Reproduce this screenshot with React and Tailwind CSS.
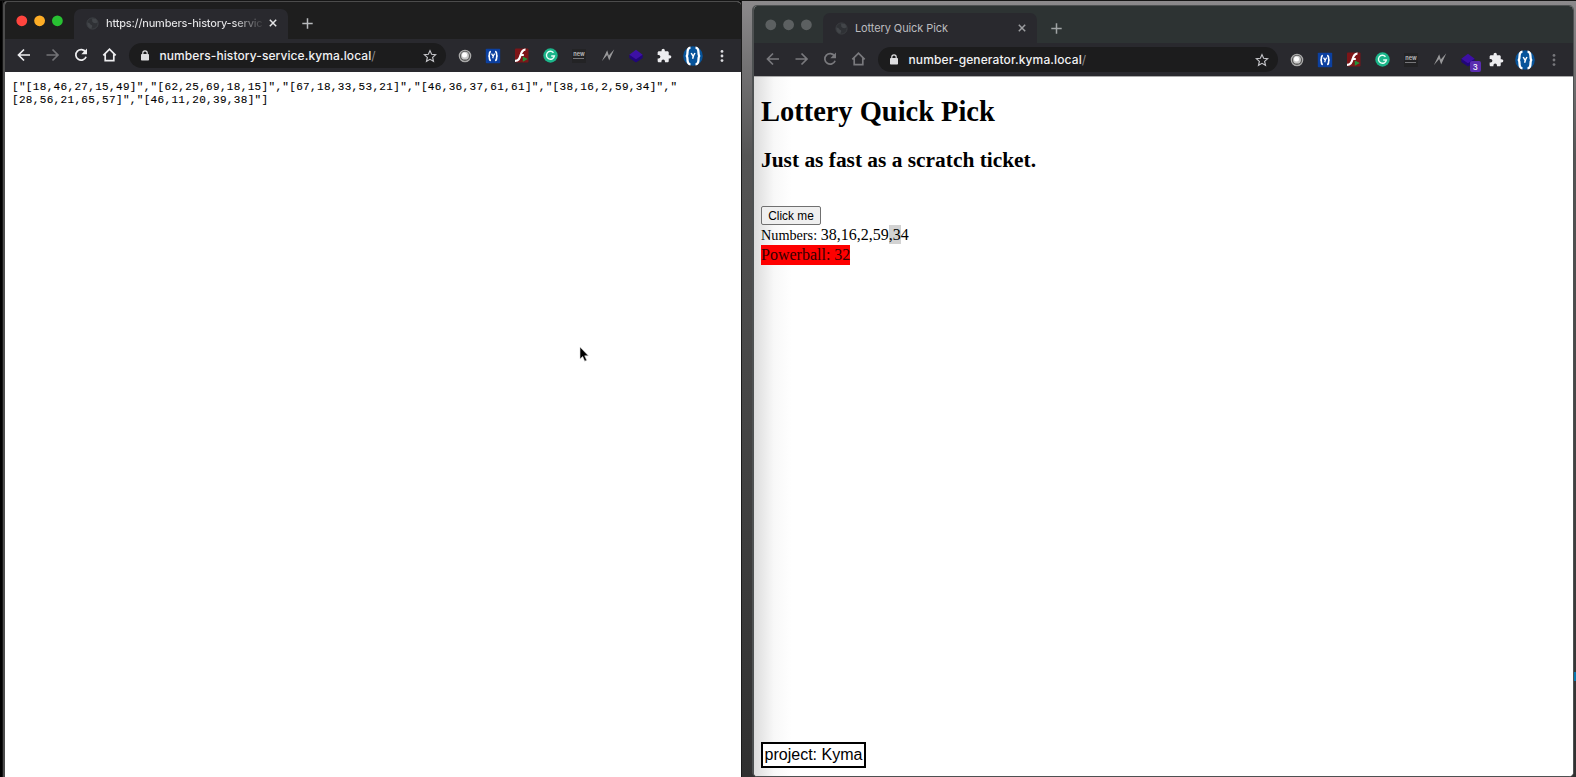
import React from "react";

function Globe({ dim }) {
  return (
    <svg width="13" height="13" viewBox="0 0 13 13" className="shrink-0">
      <circle cx="6.500" cy="6.500" r="5.600" fill="#2f3135" stroke={dim ? "#3c3e42" : "#3f4246"} strokeWidth="1" />
      <path d="M1.300 5.500c2 .2 3 1 3.400 2.200 1.500.3 1.900 1.200 1.300 2.300l-.8 1.800C2.800 11.300 1 9 1.300 5.500z" fill="#424549" />
      <path d="M6 1.400l4 .6 1.700 3-1.500 1.200-2.300-.3-1.600-1.200z" fill="#424549" />
    </svg>
  );
}

function TabStrip({ active, title, titleClass }) {
  const lights = active ? ["#ff453e", "#fdad26", "#28c132"] : ["#5c6061", "#5c6061", "#5c6061"];
  return (
    <div className={"flex h-[37px] shrink-0 items-end " + (active ? "bg-[#1e1e1e]" : "bg-[#2d3333]")}>
      <div className="flex w-[69px] shrink-0 self-start pl-[10.500px] pt-[13px]">
        <svg width="50" height="12" viewBox="0 0 50 12">
          <circle cx="5.800" cy="5.800" r="5.400" fill={lights[0]} />
          <circle cx="23.600" cy="5.800" r="5.400" fill={lights[1]} />
          <circle cx="41.400" cy="5.800" r="5.400" fill={lights[2]} />
        </svg>
      </div>
      <div className={"flex h-[30px] w-[214px] shrink-0 items-center rounded-t-[7px] bg-[#29292e] pl-[11.500px] " + (active ? "pb-[2px]" : "pb-0")}>
        <Globe dim={!active} />
        <div className={"ml-[7.500px] w-[156px] shrink-0 whitespace-nowrap font-['Inter',sans-serif] " + titleClass}>
          {title}
        </div>
        <svg width="8" height="8" viewBox="0 0 8 8" className="ml-[7px]">
          <path d="M.8.8l6.400 6.400M7.200.8L.8 7.200" stroke={active ? "#e4e5e7" : "#9c9da0"} strokeWidth="1.500" />
        </svg>
      </div>
      <div className={"flex h-[30px] items-center pl-[14px] " + (active ? "pb-[1px]" : "pb-0")}>
        <svg width="11" height="11" viewBox="0 0 11 11">
          <path d="M5.500.3v10.400M.3 5.500h10.400" stroke={active ? "#b8babd" : "#a0a4a5"} strokeWidth="1.500" />
        </svg>
      </div>
    </div>
  );
}

function NavIcons({ active }) {
  const on = active ? "#eeeef0" : "#79797d";
  const off = active ? "#737377" : "#79797d";
  return (
    <svg width="124" height="33" viewBox="1 0 124 33" fill="none" strokeWidth="1.700" className="shrink-0">
      <path d="M26 16H15M20 10.500L14.500 16l5.500 5.500" stroke={on} />
      <path d="M42.500 16h11M48.500 10.500l5.500 5.500-5.500 5.500" stroke={off} />
      <path d="M81.600 13a5.300 5.300 0 1 0 .5 4.700" stroke={on} />
      <path d="M83 9.500v5.700h-5.700z" fill={on} />
      <path d="M99.300 16.300l6.200-6.100 6.200 6.100M101.200 15.200v6.500h8.600v-6.500" stroke={on} />
    </svg>
  );
}

function BadgeMark({ size, round }) {
  return (
    <svg width={size} height={size} viewBox="0 0 20 20">
      {round ? <circle cx="10" cy="10" r="9.800" fill="#07549b" /> : <rect x="1" y="1" width="18" height="18" rx="1" fill="#0c40a0" />}
      <g fill="none" stroke="#fff">
        {round ? (
          <path
            d="M7.500 1.600C5 1.800 4.500 3.500 4.500 6.500c0 1.700-.1 2.500-.7 3.500.6 1 .7 1.800.7 3.500 0 3 .5 4.700 3 4.900M12.500 1.600c2.500.2 3 1.900 3 4.900 0 1.700.1 2.500.7 3.500-.6 1-.7 1.800-.7 3.500 0 3-.5 4.700-3 4.900"
            strokeWidth="2.300"
          />
        ) : (
          <path
            d="M7.400 4.300c-1.700.2-1.900 1.200-1.900 3.200 0 1.200-.1 1.800-.5 2.500.4.700.5 1.300.5 2.500 0 2 .2 3 1.900 3.200M12.600 4.300c1.700.2 1.900 1.200 1.900 3.200 0 1.200.1 1.800.5 2.500-.4.700-.5 1.300-.5 2.500 0 2-.2 3-1.900 3.200"
            strokeWidth="2"
          />
        )}
        <path d="M8.200 7l1.900 3.300L12 7M10.600 9.500l-1 3.300" strokeWidth="1.500" />
      </g>
    </svg>
  );
}

function Slot({ children }) {
  return <div className="relative flex h-full w-[28.550px] shrink-0 items-center justify-center">{children}</div>;
}

function Extensions({ active, count }) {
  return (
    <div className="flex h-full w-[295.500px] shrink-0 items-center pl-[5px]">
      <Slot>
        <svg width="14" height="14" viewBox="0 0 14 14">
          <circle cx="7" cy="7" r="5.700" fill="#575757" stroke="#a9a9a9" strokeWidth="1.200" />
          <circle cx="7" cy="6.700" r="3.900" fill="#c9c9c9" />
          <circle cx="6.500" cy="6" r="2.500" fill="#fff" />
        </svg>
      </Slot>
      <Slot><BadgeMark size={16} /></Slot>
      <Slot>
        <svg width="15" height="15" viewBox="0 0 15 15">
          <rect x="1" y=".5" width="13.500" height="14" rx="1" fill="#7d1518" />
          <path d="M11.500 1.600C8.500 1.300 7.600 3.700 6.600 7 5.600 10.500 4.700 12.800 1 12.800M5.800 7h4" fill="none" stroke="#fff" strokeWidth="2.200" />
          <path d="M8.800 8.500l5 2.600-5 2.700z" fill="#25933a" />
        </svg>
      </Slot>
      <Slot>
        <svg width="15" height="15" viewBox="0 0 15 15">
          <circle cx="7.500" cy="7.500" r="7.200" fill="#1bb58a" />
          <path d="M10.500 4.700A4 4 0 1 0 11.400 8H8.200" fill="none" stroke="#eafff8" strokeWidth="1.400" />
        </svg>
      </Slot>
      <Slot>
        <div className="flex h-[14px] w-[14px] flex-col items-center bg-[#232325] pt-[2px]">
          <span className="font-['Inter',sans-serif] text-[5.500px] font-bold leading-[6px] text-[#b5b5b5]">new</span>
          <span className="mt-[1px] h-px w-[11px] bg-[#77777a]" />
        </div>
      </Slot>
      <Slot>
        <svg width="14" height="13" viewBox="0 0 14 13">
          <path d="M.8 12.200L6.200 1.300l1.600 5.200L13.300.3 8.200 11.500 6.200 6z" fill="#98989a" />
        </svg>
      </Slot>
      <Slot>
        <svg width="14" height="14" viewBox="0 0 14 14">
          <path d="M.3 6v3L7 13.600 13.700 9V6z" fill="#21067a" />
          <path d="M7 .8l6.700 4.900L7 10.300.3 5.700z" fill="#3d10a5" />
        </svg>
        {count && (
          <span className="absolute left-[16px] top-[18px] flex h-[11px] w-[11px] items-center justify-center rounded-[2px] bg-[#5a2db0] font-['Inter',sans-serif] text-[8px] font-medium leading-none text-white">
            {count}
          </span>
        )}
      </Slot>
      <Slot>
        <svg width="15" height="15" viewBox="1 0 23 23" fill="#ececef">
          <path d="M20.500 11H19V7c0-1.100-.9-2-2-2h-4V3.500a2.500 2.500 0 0 0-5 0V5H4c-1.100 0-2 .9-2 2v3.800h1.500a2.700 2.700 0 0 1 0 5.400H2V20c0 1.100.9 2 2 2h3.800v-1.500a2.700 2.700 0 0 1 5.400 0V22H17c1.100 0 2-.9 2-2v-4h1.500a2.500 2.500 0 0 0 0-5z" />
        </svg>
      </Slot>
      <Slot><BadgeMark size={20} round /></Slot>
      <Slot>
        <svg width="4" height="14" viewBox="0 0 4 14" fill={active ? "#dcdce0" : "#77777b"}>
          <circle cx="2" cy="2.400" r="1.400" />
          <circle cx="2" cy="7" r="1.400" />
          <circle cx="2" cy="11.600" r="1.400" />
        </svg>
      </Slot>
    </div>
  );
}

function Toolbar({ active, host, count, hostClass }) {
  return (
    <div className="flex h-[33px] shrink-0 items-center bg-[#29292e]">
      <NavIcons active={active} />
      <div className="flex h-[25px] min-w-0 flex-1 items-center rounded-full bg-[#1c1c1d] pl-[12px] pr-[9px]">
        <svg width="8" height="11" viewBox="0 0 8 11" className="shrink-0">
          <rect y="4" width="8" height="6.500" rx=".8" fill="#dedee0" />
          <path d="M1.800 4.500V3a2.200 2.200 0 0 1 4.400 0v1.500" fill="none" stroke="#dedee0" strokeWidth="1.200" />
        </svg>
        <div className={"ml-[10.500px] flex-1 whitespace-nowrap font-['Inter',sans-serif] text-[12px] font-medium leading-[16px] text-[#f1f1f3] " + hostClass}>
          {host}
          <span className="font-normal text-[#8a8a8e]">/</span>
        </div>
        <svg width="14" height="14" viewBox="0 0 24 24" fill="none" stroke="#c4c4c8" strokeWidth="2">
          <path d="M12 2.800l2.800 6.300 6.800.7-5.100 4.600 1.500 6.800-6-3.500-6 3.500 1.500-6.800L2.400 9.800l6.800-.7z" />
        </svg>
      </div>
      <Extensions active={active} count={count} />
    </div>
  );
}

function HistoryWindow() {
  return (
    <div className="flex h-[776px] w-[738px] shrink-0 flex-col overflow-hidden rounded-t-[4px] border-l-2 border-t border-[#4c4c4c] bg-white">
      <TabStrip
        active
        title="https://numbers-history-servic"
        titleClass="text-[11px] font-medium tracking-[-0.210px] bg-linear-to-r from-[#e6e6e8] from-82% to-[#3a3a3e] bg-clip-text text-transparent"
      />
      <Toolbar active host="numbers-history-service.kyma.local" hostClass="tracking-[0.090px]" />
      <div className="pl-[7px] pt-[9px] font-['Liberation_Mono',monospace] text-[11px] leading-[13.300px] tracking-[0.330px] text-black [-webkit-text-stroke:0.1px_#000]">
        <div className="whitespace-nowrap">{'["[18,46,27,15,49]","[62,25,69,18,15]","[67,18,33,53,21]","[46,36,37,61,61]","[38,16,2,59,34]","'}</div>
        <div className="whitespace-nowrap">{'[28,56,21,65,57]","[46,11,20,39,38]"]'}</div>
      </div>
    </div>
  );
}

function LotteryWindow() {
  return (
    <div className="mt-[4px] flex h-[772px] w-[822px] shrink-0 flex-col overflow-hidden rounded-[5px] border border-l-2 border-[#4e5152] bg-white">
      <TabStrip title="Lottery Quick Pick" titleClass="text-[11px] tracking-[-0.100px] text-[#bcbcbf]" />
      <Toolbar host="number-generator.kyma.local" count="3" hostClass="tracking-[0.120px]" />
      <div className="flex flex-1 flex-col items-start border-t border-[#aaa] bg-linear-to-r from-[#dcdcdc] via-[#f8f8f8] via-[20px] to-white to-[38px] pb-[8px] pl-[7px] font-['Liberation_Serif',serif] text-black">
        <h1 className="mt-[18px] text-[28.450px] font-bold leading-[33px]">Lottery Quick Pick</h1>
        <h2 className="mt-[20px] text-[21.400px] font-bold leading-[25px]">Just as fast as a scratch ticket.</h2>
        <button className="mt-[33px] h-[19px] w-[60px] rounded-[2px] border border-[#707070] bg-[#efefef] font-['Liberation_Sans',sans-serif] text-[11.860px] leading-[16px]">
          Click me
        </button>
        <div className="h-[20px] whitespace-pre text-[14.230px] leading-[19px]">
          {"Numbers: "}
          <span className="text-[16px]">38,16,2,59</span>
          <span className="inline-block h-[19px] bg-[#d2d2d2] align-top text-[16px]">,3</span>
          <span className="text-[16px]">4</span>
        </div>
        <div className="h-[20px] bg-[#fe0000] text-[16px] leading-[20px] text-[#300]">Powerball: 32</div>
        <div className="mt-auto flex h-[26px] w-[105px] items-center justify-center border-2 border-black bg-white font-['Liberation_Sans',sans-serif] text-[16px] leading-none">
          project: Kyma
        </div>
      </div>
    </div>
  );
}

export default function App() {
  return (
    <div className="relative flex h-[777px] w-[1576px] overflow-hidden border-t border-[#161616] bg-black">
      <div className="w-[3px] shrink-0 bg-linear-to-r from-black from-50% to-[#2c2c2c]" />
      <HistoryWindow />
      <div className="flex flex-1 border-l border-[#1a1a1a] bg-linear-to-b from-[#8b898b] via-[#555] via-20% to-[#303030] pl-[10px]">
        <LotteryWindow />
        <div className="flex flex-1 flex-col pt-[671px]">
          <div className="h-[9px] bg-[#0878ae]" />
        </div>
      </div>
      <svg className="absolute left-[579px] top-[345px]" width="12" height="17" viewBox="0 0 12 17">
        <path d="M1 1v12l2.700-2.500 2 4.700 2-.9-2-4.500h3.700z" fill="#000" stroke="#ddd" strokeWidth=".6" />
      </svg>
    </div>
  );
}
